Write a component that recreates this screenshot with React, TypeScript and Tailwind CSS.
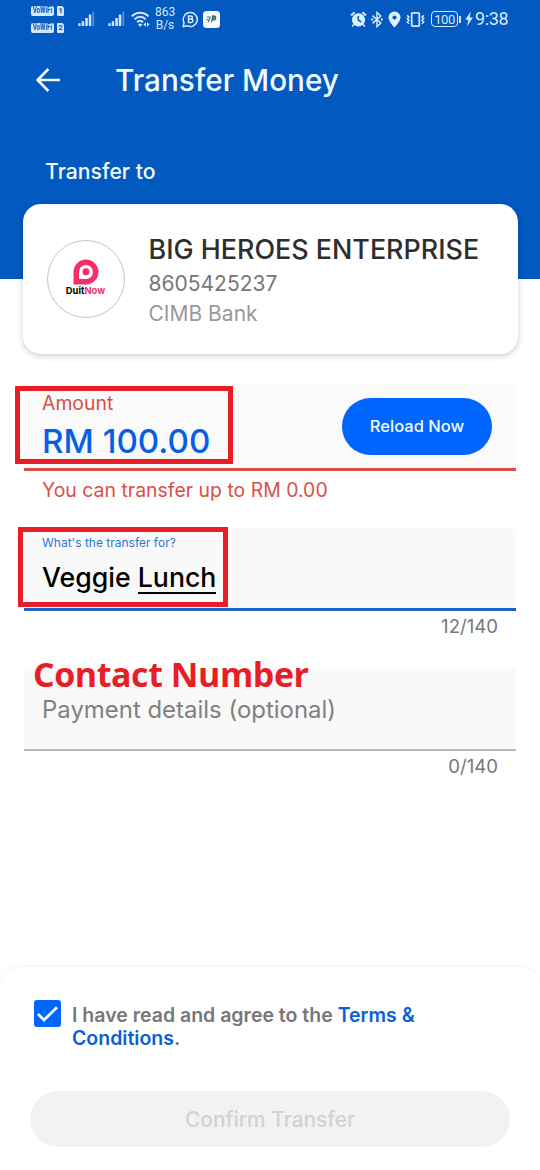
import React, { useState } from "react";

const SimBadge: React.FC<{ slot: number }> = ({ slot }) => (
  <div className="flex items-center gap-[3px]">
    <span className="flex h-[10px] w-[23px] items-center justify-center rounded-[2px] bg-[#d5e8fb] leading-none font-bold text-[#0259c0]">
      <span className="scale-x-[0.72] text-[8.5px]">VoWiFi</span>
    </span>
    <span className="flex h-[10px] w-[7px] items-center justify-center rounded-[1px] rounded-tr-[3px] bg-[#d5e8fb] text-[8px] leading-none font-bold text-[#0259c0]">
      {slot}
    </span>
  </div>
);

const SignalIcon: React.FC = () => (
  <svg width="17" height="16" viewBox="0 0 17 16" fill="#d5e8fb">
    <rect x="0.3" y="12.3" width="2.3" height="2.7" rx="0.5" />
    <rect x="3.7" y="10.3" width="2.4" height="4.7" rx="0.5" />
    <rect x="7.3" y="7" width="2.5" height="8" rx="0.5" />
    <rect x="10.8" y="3.5" width="2.5" height="11.5" rx="0.5" />
    <rect x="14.5" y="0.5" width="1.7" height="14.5" rx="0.5" opacity="0.4" />
  </svg>
);

const WifiIcon: React.FC = () => (
  <svg width="19" height="17" viewBox="0 0 19 17" fill="none" stroke="#d5e8fb" strokeWidth="2">
    <path d="M0.8 5.4C5.5 0.4 12.8 0.4 17.5 5.4" />
    <path d="M3.6 8.4C6.8 5 11.5 5 14.7 8.4" />
    <path d="M6.2 11.2C8 9.4 10.3 9.4 12 11.2" />
    <path d="M9.2 16L7 13.6a3 3 0 0 1 4.4 0z" fill="#d5e8fb" stroke="none" />
    <path d="M15 11.2v4.6L12.4 13.5zM16 11.2v4.6L18.6 13.5z" fill="#d5e8fb" stroke="none" />
  </svg>
);

const ChatIcon: React.FC = () => (
  <svg width="17" height="17" viewBox="0 0 17 17" fill="none" stroke="#d5e8fb" strokeWidth="1.5">
    <path d="M1.2 15.8L2 11.6A7 7 0 1 1 5 14.7z" strokeLinejoin="round" />
    <path d="M6.5 5h2.3a1.5 1.5 0 0 1 0 3.1H6.5zM6.5 8.1h2.7a1.6 1.6 0 0 1 0 3.3H6.5z" />
  </svg>
);

const RunnerIcon: React.FC = () => (
  <svg width="17" height="17" viewBox="0 0 17 17">
    <rect width="17" height="17" rx="3.5" fill="#f5fbff" />
    <path d="M4 6h3.4L6.2 8.6M3.2 8.8h3.6M6.4 8.8L5 11.6" stroke="#3a6d86" strokeWidth="1" fill="none" />
    <path d="M9 4.6c2.2-.8 4.6.4 4.3 2.6-.3 1.9-2 2.6-3.6 2.2L7.8 12.6 8.6 8z" fill="#3c6577" />
    <path d="M10.2 5.8l2 .7-1.4 1.8z" fill="#6dbb92" />
  </svg>
);

const AlarmIcon: React.FC = () => (
  <svg width="17" height="17" viewBox="0 0 17 17">
    <path d="M1 4.4L4.6 1.2M16 4.4L12.4 1.2" stroke="#d5e8fb" strokeWidth="2" />
    <circle cx="8.5" cy="8.8" r="6.6" fill="#e1f0fd" />
    <path d="M8.3 5v4.2l3 1.8" stroke="#0259c0" strokeWidth="1.5" fill="none" />
    <path d="M3.8 13.4L2.2 15.6M13.2 13.4l1.6 2.2" stroke="#d5e8fb" strokeWidth="1.6" />
  </svg>
);

const BluetoothIcon: React.FC = () => (
  <svg width="12" height="17" viewBox="0 0 12 17" fill="none" stroke="#d5e8fb" strokeWidth="1.5">
    <path d="M1.5 4.6L9.8 12 6 15.6V1.4L9.8 5 1.5 12.4" />
    <path d="M0.2 8.5h2M9.8 8.5h2" strokeWidth="2" />
  </svg>
);

const PinIcon: React.FC = () => (
  <svg width="13" height="17" viewBox="0 0 13 17">
    <path
      d="M6.5 0.5A6 6 0 0 0 0.5 6.5C0.5 10.6 6.5 16.5 6.5 16.5S12.5 10.6 12.5 6.5A6 6 0 0 0 6.5 0.5zM6.5 4.4a2.1 2.1 0 1 1 0 4.2 2.1 2.1 0 0 1 0-4.2z"
      fill="#e1f0fd"
      fillRule="evenodd"
    />
  </svg>
);

const VibrateIcon: React.FC = () => (
  <svg width="19" height="17" viewBox="0 0 19 17" fill="none" stroke="#d5e8fb">
    <rect x="5.7" y="1.8" width="7.6" height="13.4" rx="1" strokeWidth="1.7" />
    <path d="M1 4.4l2 1.6-1.7 1.7L3 9.3 1.3 11 3 12.8M18 4.4L16 6l1.7 1.7L16 9.3l1.7 1.7L16 12.8" strokeWidth="1.5" />
  </svg>
);

const BoltIcon: React.FC = () => (
  <svg width="8" height="16" viewBox="0 0 8 16">
    <path d="M5.8 0.5L0.2 8.8h3.2L2 15.5 7.9 6.6H4.6z" fill="#d5e8fb" />
  </svg>
);

const DuitNowLogo: React.FC = () => (
  <div className="flex h-[78px] w-[78px] shrink-0 flex-col items-center rounded-full border border-[#c4c4c4] bg-white pt-[18px]">
    <svg width="26" height="26" viewBox="0 0 26 26">
      <path d="M0.5 25.5V13A12.5 12.5 0 1 1 13 25.5z" fill="#f42e6b" />
      <path d="M6 20V13A7 7 0 1 1 13 20z" fill="#fff" />
      <circle cx="13" cy="12.8" r="3.5" fill="#f42e6b" />
    </svg>
    <p className="text-[9.4px] leading-[12px] font-bold text-black">
      Duit<span className="text-[#f42e6b]">Now</span>
    </p>
  </div>
);

const App: React.FC = () => {
  const [agreed, setAgreed] = useState(true);

  return (
    <div className="relative flex h-[1170px] w-[540px] flex-col overflow-hidden bg-white font-['Inter',sans-serif]">
      <header className="h-[279px] shrink-0 bg-[#0259c0] text-[#f4faff]">
        <div className="flex h-[38px] items-center pr-[31px] pl-[31px] text-[#d5e8fb]">
          <div className="flex flex-col gap-[7px] font-['Roboto',sans-serif]">
            <SimBadge slot={1} />
            <SimBadge slot={2} />
          </div>
          <div className="ml-[14px] flex items-center gap-[13px]">
            <SignalIcon />
            <SignalIcon />
          </div>
          <div className="ml-[6px]">
            <WifiIcon />
          </div>
          <div className="ml-[5px] w-5 text-center font-['Roboto',sans-serif] text-[12px] leading-[13px]">
            863 B/s
          </div>
          <div className="ml-[7px] flex items-center gap-1">
            <ChatIcon />
            <RunnerIcon />
          </div>
          <div className="ml-auto flex items-center font-['Roboto',sans-serif]">
            <AlarmIcon />
            <span className="ml-1"><BluetoothIcon /></span>
            <span className="ml-[5px]"><PinIcon /></span>
            <span className="ml-[5px]"><VibrateIcon /></span>
            <span className="ml-[6px] flex h-4 w-[27px] items-center justify-center rounded-[4px] border-[1.5px] border-[#d5e8fb] text-[13px] leading-none tracking-[-0.4px]">
              100
            </span>
            <span className="ml-px h-[7px] w-[2px] bg-[#d5e8fb]" />
            <span className="ml-1"><BoltIcon /></span>
            <span className="ml-[2px] w-[34px] text-[18px] leading-none tracking-[-0.4px]">9:38</span>
          </div>
        </div>

        <div className="mt-0.5 flex h-20 items-center pl-9">
          <button type="button" aria-label="Back">
            <svg width="24" height="24" viewBox="0 0 24 24" fill="none" stroke="#f4faff" strokeWidth="2.6">
              <path d="M24 12H2M12.4 1L1.6 12l10.8 11" />
            </svg>
          </button>
          <h1 className="ml-[55px] text-[29.7px] leading-9 font-medium">Transfer Money</h1>
        </div>
        <p className="mt-[38px] pl-[45px] text-[21.2px] leading-[26px] font-medium">Transfer to</p>
      </header>

      <section className="relative mx-[22.5px] -mt-[75px] flex h-[150px] shrink-0 items-center rounded-[18px] bg-white pl-6 shadow-[0_2px_6px_rgba(0,0,0,0.2)]">
        <DuitNowLogo />
        <div className="ml-6 pt-1">
          <h2 className="text-[26.9px] leading-8 font-medium text-[#2e2e2e]">BIG HEROES ENTERPRISE</h2>
          <p className="mt-1 text-[21px] leading-[30px] text-[#777]">8605425237</p>
          <p className="text-[21px] leading-[30px] text-[#999]">CIMB Bank</p>
        </div>
      </section>

      <main className="px-6 pt-[30px]">
        <div className="flex h-[87px] items-start justify-between rounded-t border-b-[3px] border-[#d94f47] bg-[#fafafa] pr-6 pl-[18px]">
          <div className="pt-[7px]">
            <p className="text-[19.4px] leading-6 text-[#d94f47]">Amount</p>
            <p className="mt-[6px] text-[33.2px] leading-10 font-medium text-[#0560e6]">RM 100.00</p>
          </div>
          <button
            type="button"
            className="mt-[14px] h-[57px] w-[150px] rounded-full bg-[#0066ff] text-[16.5px] font-medium text-[#f4faff]"
          >
            Reload Now
          </button>
        </div>
        <p className="mt-[7px] pl-[18px] text-[19.45px] leading-6 text-[#d94f47]">You can transfer up to RM 0.00</p>

        <div className="mt-[26px] h-[83px] rounded-t border-b-[3px] border-[#1b62c9] bg-[#f9f9f9] pt-[7px] pl-[18px]">
          <p className="text-[12px] leading-4 text-[#2f74d8]">What's the transfer for?</p>
          <p className="mt-[10px] text-[26.7px] leading-8 font-medium text-black">
            Veggie <span className="inline-block h-[33px] border-b-2 border-black">Lunch</span>
          </p>
        </div>
        <p className="mt-[3px] pr-[18px] text-right text-[18.6px] leading-6 text-[#777]">12/140</p>

        <div className="mt-[31px] h-[82px] rounded-t border-b-2 border-[#b8b8b8] bg-[#f9f9f9] pt-[26px] pl-[18px]">
          <p className="text-[23.95px] leading-[30px] text-[#808080]">Payment details (optional)</p>
        </div>
        <p className="mt-[3px] pr-[18px] text-right text-[18.6px] leading-6 text-[#777]">0/140</p>
      </main>

      <footer className="mt-auto h-[203px] shrink-0 rounded-t-[20px] bg-white px-[30px] pt-[33px] shadow-[0_-1px_3px_rgba(0,0,0,0.06)]">
        <label className="flex items-start pl-1">
          <input
            type="checkbox"
            checked={agreed}
            onChange={(e) => setAgreed(e.target.checked)}
            className="sr-only"
          />
          <span className="flex h-[27px] w-[27px] items-center justify-center rounded-[3px] bg-[#0066ff]">
            {agreed && (
              <svg width="21" height="16" viewBox="0 0 21 16" fill="none" stroke="#f4faff" strokeWidth="2.8">
                <path d="M1 8l6 6L20 1.2" />
              </svg>
            )}
          </span>
          <span className="ml-[11px] pt-[3.5px] text-[19.5px] leading-[23.5px] font-semibold text-[#777]">
            I have read and agree to the <span className="text-[#0b5fd6]">Terms &amp;</span>
            <br />
            <span className="text-[#0b5fd6]">Conditions</span>.
          </span>
        </label>
        <button
          type="button"
          disabled
          className="mt-[40.5px] h-14 w-full rounded-full bg-[#f2f2f2] pt-px text-[20.9px] font-medium text-[#d2d2d2]"
        >
          Confirm Transfer
        </button>
      </footer>

      {/* highlight marks over the form */}
      <div className="absolute top-[386px] left-[15px] h-[78px] w-[218px] border-5 border-[#e81e27]" />
      <div className="absolute top-[527px] left-[18px] h-[80px] w-[210px] border-5 border-[#e81e27]" />
      <p className="absolute top-[650px] left-[33px] font-['Open_Sans',sans-serif] text-[34px] leading-[48px] font-bold tracking-[-0.45px] whitespace-nowrap text-[#e81e27]">
        Contact Number
      </p>
    </div>
  );
};

export default App;
